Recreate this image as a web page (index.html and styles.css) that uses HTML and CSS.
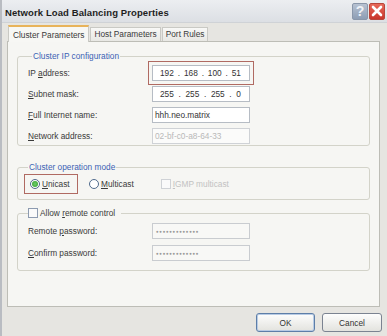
FILE: index.html
```html
<!DOCTYPE html>
<html>
<head>
<meta charset="utf-8">
<link rel="stylesheet" href="styles.css">
</head>
<body>
<div class="window">
  <div class="titlebar">
    <div class="title">Network Load Balancing Properties</div>
    <div class="tbtns">
      <div class="tbtn help">?</div>
      <div class="tbtn close"><svg width="12" height="12" viewBox="0 0 12 12"><path d="M2 2 L10 10 M10 2 L2 10" stroke="#fff" stroke-width="2.6" stroke-linecap="round"/></svg></div>
    </div>
  </div>
  <div class="tabs">
    <div class="tab active">Cluster Parameters</div>
    <div class="tab">Host Parameters</div>
    <div class="tab">Port Rules</div>
  </div>
  <div class="panel">
    <fieldset class="group g1">
      <legend class="legend">Cluster IP configuration</legend>
      <div class="row">
        <div class="label">IP <u>a</u>ddress:</div>
        <div class="field ip hl"><span>192</span><i>.</i><span>168</span><i>.</i><span>100</span><i>.</i><span>51</span></div>
      </div>
      <div class="row">
        <div class="label"><u>S</u>ubnet mask:</div>
        <div class="field ip"><span>255</span><i>.</i><span>255</span><i>.</i><span>255</span><i>.</i><span>0</span></div>
      </div>
      <div class="row">
        <div class="label"><u>F</u>ull Internet name:</div>
        <div class="field text">hhh.neo.matrix</div>
      </div>
      <div class="row">
        <div class="label"><u>N</u>etwork address:</div>
        <div class="field text disabled">02-bf-c0-a8-64-33</div>
      </div>
    </fieldset>
    <fieldset class="group g2">
      <legend class="legend">Cluster operation mode</legend>
      <div class="modes">
        <div class="opt hlbox"><span class="radio on"></span><span><u>U</u>nicast</span></div>
        <div class="opt multi"><span class="radio"></span><span><u>M</u>ulticast</span></div>
        <div class="opt dis"><span class="check"></span><span><u>I</u>GMP multicast</span></div>
      </div>
    </fieldset>
    <fieldset class="group g3">
      <legend class="legend2"><span class="check"></span><span>Allow <u>r</u>emote control</span></legend>
      <div class="row">
        <div class="label">Remote <u>p</u>assword:</div>
        <div class="field pw">●●●●●●●●●●●●●</div>
      </div>
      <div class="row">
        <div class="label"><u>C</u>onfirm password:</div>
        <div class="field pw">●●●●●●●●●●●●●</div>
      </div>
    </fieldset>
  </div>
  <div class="buttons">
    <div class="btn default">OK</div>
    <div class="btn">Cancel</div>
  </div>
</div>
</body>
</html>
```
FILE: styles.css
```css
* { box-sizing: border-box; }
html, body { margin: 0; padding: 0; }
body {
  width: 387px; height: 336px; overflow: hidden;
  font-family: "Liberation Sans", Arial, sans-serif;
  font-size: 8px;
  color: #3a3a3a;
  background: #e6e5e1;
}
u { text-decoration: underline; }
.window {
  width: 387px; height: 336px;
  border-left: 2px solid #b9bcc2;
  display: flex; flex-direction: column;
}
.titlebar {
  height: 23px;
  display: flex; align-items: center; justify-content: space-between;
  padding: 0 2px 0 3px;
  background: linear-gradient(#eceef1, #dcdfe4);
  border-bottom: 1px solid #cfd2d6;
}
.title { font-weight: bold; font-size: 9.5px; color: #1e1e1e; letter-spacing: 0.1px; padding-top: 2px; }
.tbtns { display: flex; gap: 1px; }
.tbtn {
  width: 16px; height: 17px; border-radius: 2px;
  display: flex; align-items: center; justify-content: center;
  color: #fff; font-weight: bold; font-size: 14px;
}
.help { background: linear-gradient(#b7c2d2, #8d9db4); color: #eef2f8; border: 1px solid #8a97aa; }
.close { background: linear-gradient(#e76a5a, #c9352a); border: 1px solid #b8463b; }
.tabs {
  display: flex; align-items: flex-end; gap: 1px;
  padding: 0 0 0 6px; margin-top: 2px; height: 16px;
}
.tab {
  height: 14px; padding: 0 3px;
  border: 1px solid #c9c9c4; border-bottom: none;
  background: linear-gradient(#f8f8f6, #e8e8e4);
  line-height: 13px; color: #3a3a3a; font-size: 8.3px;
}
.tab.active {
  height: 17px; line-height: 16px; padding: 0 4px;
  background: #f7f7f4;
  border-top: 2px solid #e8b35a;
  position: relative; top: 1px;
}
.panel {
  width: 373px; height: 266px;
  margin-left: 5px;
  background: #f6f6f3;
  border: 1px solid #bdbdb6;
  padding: 9px 9px 0 9px;
  display: flex; flex-direction: column;
}
.group {
  margin: 0; min-width: 0;
  border: 1px solid #d3d3c9; border-radius: 3px;
  padding: 0 0 0 10px;
}
.legend { color: #3b62b4; padding: 0 1px; margin-left: 4px; font-size: 8.3px; }
.g1 { height: 95px; padding-top: 1px; }
.row { display: flex; align-items: center; height: 21px; }
.label { width: 124px; font-size: 8.3px; color: #3a3a3a; }
.field {
  width: 98px; height: 16px;
  border: 1px solid #b6bcc4; background: #fff;
  display: flex; align-items: center;
  font-size: 8.3px; color: #333;
}
.ip { justify-content: space-between; padding: 0 8px 0 7px; }
.ip i { font-style: normal; }
.hl { outline: 1px solid #b06a62; outline-offset: 3px; }
.text { padding-left: 2px; }
.disabled { color: #b9b9b9; background: #fbfbfa; border-color: #cfd2d6; }
.pw { padding-left: 3px; font-size: 4.5px; color: #9a9a9a; letter-spacing: 0.6px; border-color: #c9ccd0; background: #f8f8f6; }
.g2 { height: 38px; margin-top: 16px; padding-left: 6px; }
.modes { display: flex; align-items: center; height: 24px; }
.opt { display: flex; align-items: center; gap: 2px; font-size: 8.3px; }
.hlbox { border: 1px solid #b06a62; height: 20px; width: 54px; padding: 0 0 0 5px; }
.multi { margin-left: 11px; }
.dis { color: #c2c2c2; margin-left: 27px; }
.radio {
  width: 10px; height: 10px; border-radius: 50%;
  border: 1px solid #4f6a8c; background: #fff;
  display: inline-flex; align-items: center; justify-content: center;
}
.radio.on::after { content: ""; width: 6px; height: 6px; border-radius: 50%; background: radial-gradient(#6fd06a, #2f9a2c); }
.check {
  width: 10px; height: 10px; border: 1px solid #8d9bb0; background: #fafafa;
  display: inline-block;
}
.dis .check { border-color: #cfd2d6; }
.legend2 { display: flex; align-items: center; gap: 2px; padding: 0 6px 0 0; margin-left: 0; font-size: 8.3px; color: #3a3a3a; }
.g3 { height: 63px; margin-top: 8px; padding-left: 10px; padding-top: 2px; }
.g3 .row { height: 22px; }
.buttons {
  display: flex; justify-content: flex-end; gap: 7px;
  padding: 6px 5px 0 0;
}
.btn {
  width: 60px; height: 19px;
  border: 1px solid #7b8391; border-radius: 3px;
  background: linear-gradient(#fdfdfd, #e3e3de);
  display: flex; align-items: center; justify-content: center;
  font-size: 8.3px; color: #333;
}
.btn.default { border-color: #5d7ea8; box-shadow: inset 0 0 0 1px #b8cbe4; width: 59px; }
```
